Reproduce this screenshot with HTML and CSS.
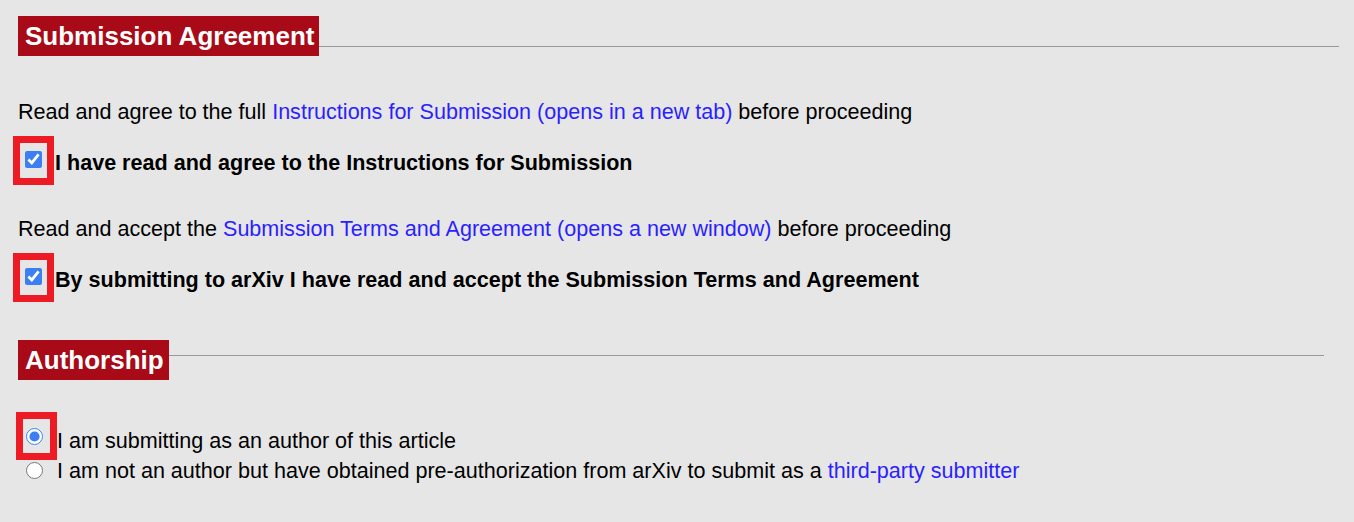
FILE: index.html
```html
<!DOCTYPE html>
<html lang="en">
<head>
<meta charset="utf-8">
<title>Submission Agreement</title>
<link rel="stylesheet" href="styles.css">
</head>
<body>
<div class="page">
  <div class="section-head first">
    <h2>Submission Agreement</h2>
    <div class="rule"></div>
  </div>

  <p class="intro intro-1">Read and agree to the full <a href="#">Instructions for Submission (opens in a new tab)</a> before proceeding</p>
  <div class="check-row">
    <span class="mark mark-check"><input type="checkbox" checked></span>
    <label class="strong">I have read and agree to the Instructions for Submission</label>
  </div>

  <p class="intro intro-2">Read and accept the <a href="#">Submission Terms and Agreement (opens a new window)</a> before proceeding</p>
  <div class="check-row">
    <span class="mark mark-check"><input type="checkbox" checked></span>
    <label class="strong">By submitting to arXiv I have read and accept the Submission Terms and Agreement</label>
  </div>

  <div class="section-head second">
    <h2>Authorship</h2>
    <div class="rule"></div>
  </div>

  <div class="radio-list">
    <div class="radio-row">
      <span class="mark mark-radio"><input type="radio" name="auth" checked></span>
      <label class="plain">I am submitting as an author of this article</label>
    </div>
    <div class="radio-row second-radio">
      <span class="slot"><input type="radio" name="auth"></span>
      <label class="plain">I am not an author but have obtained pre-authorization from arXiv to submit as a <a href="#">third-party submitter</a></label>
    </div>
  </div>
</div>
</body>
</html>
```

FILE: styles.css
```css
html, body {
  margin: 0;
  padding: 0;
}

body {
  background: #e6e6e6;
  color: #000;
  font-family: "Liberation Sans", Arial, sans-serif;
  font-size: 21.57px;
  line-height: 24px;
}

a {
  color: #2b1fff;
  text-decoration: none;
}

input {
  accent-color: #3b7ff2;
}

.page {
  padding: 16px 15px 40px 18px;
}

.section-head {
  display: flex;
  align-items: flex-start;
}

.section-head h2 {
  margin: 0;
  height: 40px;
  line-height: 40px;
  padding: 0 5px 0 7px;
  background: #a80a17;
  color: #fff;
  font-size: 26px;
  font-weight: bold;
  white-space: nowrap;
}

.rule {
  flex: 1;
  border-top: 1px solid #999;
}

.section-head.first .rule {
  margin-top: 30px;
}

.section-head.second {
  margin-top: 38px;
}

.section-head.second .rule {
  margin-top: 15px;
  margin-right: 15px;
}

.intro {
  margin: 0;
}

.intro-1 {
  margin-top: 44px;
}

.intro-2 {
  margin-top: 32px;
}

.check-row {
  display: flex;
  align-items: flex-start;
  margin-top: 12px;
  margin-left: -5px;
}

.mark {
  display: inline-flex;
  border: 7px solid #ed1c24;
  flex: none;
}

.mark-check {
  width: 27px;
  height: 35px;
}

.mark-check input {
  width: 17px;
  height: 17px;
  margin: 8px 0 0 5px;
}

.strong {
  font-weight: bold;
  margin-top: 15px;
  margin-left: 1px;
}

.radio-list {
  margin-top: 32px;
  margin-left: -2px;
}

.radio-row {
  display: flex;
  align-items: flex-start;
}

.mark-radio {
  width: 27px;
  height: 34px;
}

.mark-radio input {
  width: 17px;
  height: 17px;
  margin: 9px 0 0 3px;
}

.plain {
  margin-top: 17px;
}

.second-radio {
  margin-top: -1px;
}

.slot {
  display: inline-flex;
  width: 41px;
  flex: none;
}

.slot input {
  width: 17px;
  height: 17px;
  margin: 3px 0 0 10px;
}

.second-radio .plain {
  margin-top: 0;
}
```
